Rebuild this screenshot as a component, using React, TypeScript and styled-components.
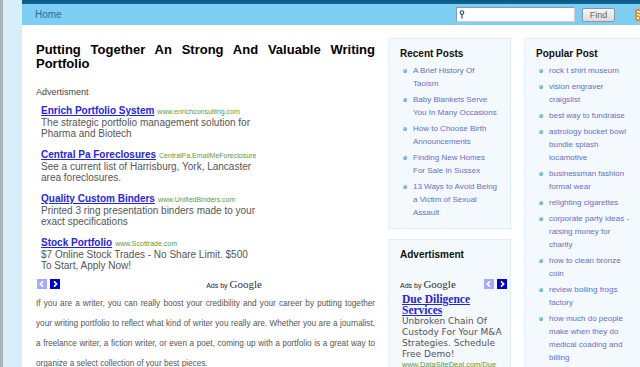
import React from "react";
import styled, { createGlobalStyle } from "styled-components";

const GlobalStyle = createGlobalStyle`
  html, body { margin: 0; padding: 0; background: #ffffff; overflow: hidden; }
  body { font-family: "Liberation Sans", Arial, sans-serif; }
  #root { width: 640px; height: 367px; overflow: hidden; }
`;

const Shell = styled.div`
  display: flex;
  align-items: stretch;
  width: 660px;
`;

const Edge = styled.div`
  flex: none;
  width: 19px;
  background: #d8eef9;
  border-left: 3px solid #aab3ba;
`;

const Page = styled.div`
  flex: none;
  width: 638px;
  background: #ffffff;
`;

const TopStrip = styled.div`
  height: 4px;
  background: linear-gradient(#0a5583, #13699b);
`;

const NavBar = styled.nav`
  height: 21px;
  display: flex;
  align-items: center;
  background: #7ccff2;
  padding: 0 13px;
`;

const HomeLink = styled.a`
  font-size: 10px;
  color: #2f68a8;
  text-decoration: none;
`;

const SearchForm = styled.form`
  margin: 0 0 0 auto;
  display: flex;
  align-items: center;
`;

const SearchField = styled.div`
  box-sizing: border-box;
  width: 119px;
  height: 15px;
  background: #ffffff;
  border: 1px solid #8d9aa5;
  border-right-color: #c9d0d5;
  border-bottom-color: #c9d0d5;
  display: flex;
  align-items: center;
  padding-left: 2px;
`;

const FindButton = styled.button`
  box-sizing: border-box;
  margin-left: 7px;
  width: 33px;
  height: 14px;
  padding: 0;
  border: 1px solid #8f969b;
  border-radius: 2px;
  background: linear-gradient(#f7f7f7, #dcdcdc);
  font-family: "Liberation Sans", Arial, sans-serif;
  font-size: 9px;
  line-height: 12px;
  color: #666666;
`;

const RssIcon = styled.span`
  margin-left: 20px;
  width: 12px;
  height: 12px;
  display: inline-flex;
`;

const Content = styled.div`
  display: flex;
  align-items: flex-start;
`;

const Main = styled.main`
  flex: none;
  width: 339px;
  padding: 18px 10px 0 14px;
`;

const Title = styled.h1`
  margin: 0;
  font-size: 13px;
  line-height: 14px;
  font-weight: bold;
  color: #000000;
  text-align: justify;
`;

const AdLabel = styled.div`
  margin-top: 16px;
  font-size: 9px;
  line-height: 11px;
  color: #444444;
`;

const AdBlock = styled.div`
  width: 226px;
  margin-top: 6px;
  display: flex;
  flex-direction: column;
  gap: 9px;
`;

const AdItem = styled.div`
  padding: 0 6px 0 5px;
  font-size: 10px;
`;

const AdTitleRow = styled.div`
  font-size: 10px;
  line-height: 13px;
  height: 13px;
  white-space: nowrap;
  overflow: hidden;
`;

const AdTitle = styled.a`
  font-size: 10px;
  font-weight: bold;
  color: #2424ee;
  text-decoration: underline;
`;

const AdUrl = styled.span`
  font-size: 7px;
  color: #5a9a45;
  margin-left: 3px;
`;

const AdDesc = styled.div`
  font-size: 10px;
  line-height: 11px;
  color: #555555;
`;

const AdFooter = styled.div`
  width: 225px;
  margin-top: 8px;
  height: 10px;
  display: flex;
  align-items: center;
  justify-content: space-between;
  padding-left: 1px;
`;

const Pager = styled.div`
  display: flex;
  gap: 3px;
`;

const PagerButton = styled.span<{ $active?: boolean }>`
  width: 10px;
  height: 10px;
  display: inline-flex;
  align-items: center;
  justify-content: center;
  background: ${(p) => (p.$active ? "#0000cc" : "#a9a9fb")};
`;

const AdsBy = styled.span`
  display: inline-flex;
  align-items: baseline;
  gap: 2px;
  font-size: 7px;
  color: #222222;
`;

const GoogleWord = styled.span`
  font-family: "Liberation Serif", "Times New Roman", serif;
  font-size: 11px;
  color: #333333;
`;

const Body = styled.p`
  margin: 5px 0 0;
  font-size: 8.2px;
  line-height: 20px;
  color: #555555;
  text-align: justify;
`;

const Side = styled.aside<{ $width: number; $offset: number }>`
  flex: none;
  width: ${(p) => p.$width}px;
  margin: 13px 0 0 ${(p) => p.$offset}px;
  display: flex;
  flex-direction: column;
  gap: 10px;
`;

const Box = styled.section<{ $pr: number }>`
  background: #f4f9fd;
  border: 1px solid #e2eff8;
  padding: 9px ${(p) => p.$pr}px 9px 11px;
  overflow: hidden;
`;

const BoxTitle = styled.h2`
  margin: 0 0 4px;
  font-size: 10px;
  line-height: 12px;
  font-weight: bold;
  color: #111111;
`;

const PostList = styled.ul`
  margin: 0;
  padding: 0;
  list-style: none;
`;

const PostItem = styled.li`
  display: grid;
  grid-template-columns: 13px 1fr;
  margin-bottom: 3px;
  &:last-child { margin-bottom: 0; }
`;

const Bullet = styled.span`
  width: 4px;
  height: 4px;
  margin: 4.5px 0 0 3px;
  border-radius: 50%;
  background: radial-gradient(circle at 35% 35%, #9fdcf5, #2586bf);
`;

const PostLink = styled.a`
  font-size: 8px;
  line-height: 13px;
  color: #6670c8;
  text-decoration: none;
`;

const SideAdHead = styled.div`
  margin-top: 17px;
  height: 12px;
  display: flex;
  align-items: center;
  justify-content: space-between;
`;

const SideAd = styled.div`
  margin-top: 4px;
  padding-left: 2px;
`;

const SideAdTitle = styled.a`
  display: block;
  font-family: "Liberation Serif", "Times New Roman", serif;
  font-weight: bold;
  font-size: 11.5px;
  line-height: 11px;
  color: #2424dd;
  text-decoration: underline;
`;

const SideAdDesc = styled.div`
  font-family: "DejaVu Sans", Verdana, sans-serif;
  font-size: 9px;
  line-height: 11px;
  color: #555555;
`;

const SideAdUrl = styled.div`
  font-size: 7.5px;
  line-height: 9px;
  color: #5a9a45;
  white-space: nowrap;
  overflow: hidden;
`;

const ads = [
  {
    title: "Enrich Portfolio System",
    url: "www.enrichconsulting.com",
    desc: "The strategic portfolio management solution for Pharma and Biotech",
  },
  {
    title: "Central Pa Foreclosures",
    url: "CentralPa.EmailMeForeclosure",
    desc: "See a current list of Harrisburg, York, Lancaster area foreclosures.",
  },
  {
    title: "Quality Custom Binders",
    url: "www.UnifiedBinders.com",
    desc: "Printed 3 ring presentation binders made to your exact specifications",
  },
  {
    title: "Stock Portfolio",
    url: "www.Scottrade.com",
    desc: "$7 Online Stock Trades - No Share Limit. $500 To Start, Apply Now!",
  },
];

const recent = [
  "A Brief History Of Taoism",
  "Baby Blankets Serve You In Many Occasions",
  "How to Choose Birth Announcements",
  "Finding New Homes For Sale in Sussex",
  "13 Ways to Avoid Being a Victim of Sexual Assault",
];

const popular = [
  "rock t shirt museum",
  "vision engraver craigslist",
  "best way to fundraise",
  "astrology bucket bowl bundle splash locamotive",
  "businessman fashion formal wear",
  "relighting cigarettes",
  "corporate party ideas - raising money for charity",
  "how to clean bronze coin",
  "review boiling frogs factory",
  "how much do people make when they do medical coading and billing",
];

const Chevron = ({ dir }: { dir: "left" | "right" }) => (
  <svg width="10" height="10" viewBox="0 0 10 10">
    <path
      d={dir === "left" ? "M6 2.3 L3.4 5 L6 7.7" : "M4 2.3 L6.6 5 L4 7.7"}
      fill="none"
      stroke="#ffffff"
      strokeWidth="1.7"
    />
  </svg>
);

const Pagers = () => (
  <Pager>
    <PagerButton>
      <Chevron dir="left" />
    </PagerButton>
    <PagerButton $active>
      <Chevron dir="right" />
    </PagerButton>
  </Pager>
);

const AdsByGoogle = () => (
  <AdsBy>
    Ads by <GoogleWord>Google</GoogleWord>
  </AdsBy>
);

export default function App() {
  return (
    <>
      <GlobalStyle />
      <Shell>
        <Edge />
        <Page>
          <TopStrip />
          <NavBar>
            <HomeLink href="#">Home</HomeLink>
            <SearchForm onSubmit={(e) => e.preventDefault()}>
              <SearchField>
                <svg width="6" height="9" viewBox="0 0 6 9">
                  <circle cx="3" cy="2.6" r="1.8" fill="none" stroke="#1d4f9a" strokeWidth="1.1" />
                  <path d="M3 4.4 V8.5" stroke="#1d4f9a" strokeWidth="1.2" />
                </svg>
              </SearchField>
              <FindButton type="submit">Find</FindButton>
              <RssIcon>
                <svg width="12" height="12" viewBox="0 0 12 12">
                  <rect width="12" height="12" rx="2" fill="#f28a1c" />
                  <circle cx="3" cy="9" r="1.2" fill="#fff" />
                  <path d="M2 5.5 A4.5 4.5 0 0 1 6.5 10 M2 2.5 A7.5 7.5 0 0 1 9.5 10" fill="none" stroke="#fff" strokeWidth="1.3" />
                </svg>
              </RssIcon>
            </SearchForm>
          </NavBar>
          <Content>
            <Main>
              <Title>Putting Together An Strong And Valuable Writing Portfolio</Title>
              <AdLabel>Advertisment</AdLabel>
              <AdBlock>
                {ads.map((ad) => (
                  <AdItem key={ad.title}>
                    <AdTitleRow>
                      <AdTitle href="#">{ad.title}</AdTitle>
                      <AdUrl>{ad.url}</AdUrl>
                    </AdTitleRow>
                    <AdDesc>{ad.desc}</AdDesc>
                  </AdItem>
                ))}
              </AdBlock>
              <AdFooter>
                <Pagers />
                <AdsByGoogle />
              </AdFooter>
              <Body>
                If you are a writer, you can really boost your credibility and your career by putting
                together your writing portfolio to reflect what kind of writer you really are. Whether
                you are a journalist, a freelance writer, a fiction writer, or even a poet, coming up
                with a portfolio is a great way to organize a select collection of your best pieces.
              </Body>
            </Main>
            <Side $width={123} $offset={3}>
              <Box $pr={12}>
                <BoxTitle>Recent Posts</BoxTitle>
                <PostList>
                  {recent.map((t) => (
                    <PostItem key={t}>
                      <Bullet />
                      <PostLink href="#">{t}</PostLink>
                    </PostItem>
                  ))}
                </PostList>
              </Box>
              <Box $pr={3}>
                <BoxTitle>Advertisment</BoxTitle>
                <SideAdHead>
                  <AdsByGoogle />
                  <Pagers />
                </SideAdHead>
                <SideAd>
                  <SideAdTitle href="#">Due Diligence Services</SideAdTitle>
                  <SideAdDesc>
                    Unbroken Chain Of Custody For Your M&amp;A Strategies. Schedule Free Demo!
                  </SideAdDesc>
                  <SideAdUrl>www.DataSiteDeal.com/Due</SideAdUrl>
                </SideAd>
              </Box>
            </Side>
            <Side $width={136} $offset={13}>
              <Box $pr={25}>
                <BoxTitle>Popular Post</BoxTitle>
                <PostList>
                  {popular.map((t) => (
                    <PostItem key={t}>
                      <Bullet />
                      <PostLink href="#">{t}</PostLink>
                    </PostItem>
                  ))}
                </PostList>
              </Box>
            </Side>
          </Content>
        </Page>
      </Shell>
    </>
  );
}
